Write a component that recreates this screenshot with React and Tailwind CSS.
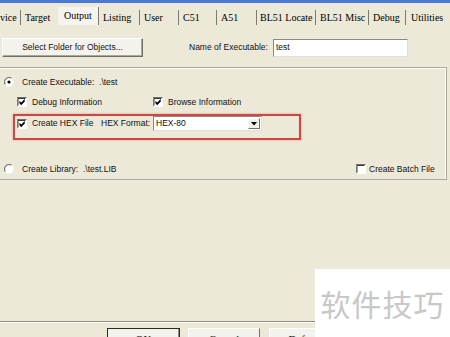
const tabs = [
  { label: 'vice', cls: 'w-[21px] pl-[0px] h-[15px] border-r border-[#7d7a6e]' },
  { label: 'Target', cls: 'w-[37px] pl-[4px] h-[15px]' },
  { label: 'Output', cls: 'w-[41px] pl-[6px] h-[18px] bg-[#f5f4ee] border-r border-[#7d7a6e]' },
  { label: 'Listing', cls: 'w-[41px] pl-[4px] h-[15px] border-r border-[#7d7a6e]' },
  { label: 'User', cls: 'w-[39px] pl-[4px] h-[15px] border-r border-[#7d7a6e]' },
  { label: 'C51', cls: 'w-[38px] pl-[4px] h-[15px] border-r border-[#7d7a6e]' },
  { label: 'A51', cls: 'w-[40px] pl-[4px] h-[15px] border-r border-[#7d7a6e]' },
  { label: 'BL51 Locate', cls: 'w-[59px] pl-[3px] h-[15px] border-r border-[#7d7a6e]' },
  { label: 'BL51 Misc', cls: 'w-[53px] pl-[4px] h-[15px] border-r border-[#7d7a6e]' },
  { label: 'Debug', cls: 'w-[37px] pl-[4px] h-[15px] border-r border-[#7d7a6e]' },
  { label: 'Utilities', cls: 'w-[50px] pl-[5px] h-[15px]' },
];

function CheckBox({ checked }) {
  return (
    <svg width="10" height="10" viewBox="0 0 10 10" className="shrink-0">
      <rect x="0" y="0" width="10" height="10" fill="#fff" />
      <path d="M0 9.5V0.5H9.5" stroke="#6f6d64" strokeWidth="1" fill="none" />
      <path d="M1 8.5V1.5H8.5" stroke="#3a3a36" strokeWidth="1" fill="none" />
      {checked && (
        <path d="M2.5 4.5 L4.2 6.4 L7.8 2.6 M2.5 5.5 L4.2 7.4 L7.8 3.6" stroke="#000" strokeWidth="1.1" fill="none" />
      )}
    </svg>
  );
}

function Radio({ checked }) {
  return (
    <svg width="10" height="10" viewBox="0 0 10 10" className="shrink-0">
      <circle cx="5" cy="5" r="4.5" fill="#fff" />
      <path d="M1.3 7.5 A4.5 4.5 0 0 1 7.5 1.3" stroke="#7a786e" strokeWidth="1.2" fill="none" />
      {checked && <circle cx="5" cy="5" r="1.6" fill="#000" />}
    </svg>
  );
}

export default function App() {
  return (
    <div
      className="relative w-[450px] h-[337px] overflow-hidden bg-[#ece9d8] text-[8.5px] leading-none text-[#111]"
      style={{ fontFamily: '"Liberation Sans", Arial, sans-serif' }}
    >
      <div className="h-[3px] bg-[#4a78d4]" />

      {/* tabs */}
      <div className="flex items-end h-[24px] pb-[2px]" style={{ fontFamily: '"Liberation Serif", serif' }}>
        {tabs.map((t) => (
          <div key={t.label} className={`shrink-0 flex items-center text-[10px] text-black whitespace-nowrap overflow-hidden ${t.cls}`}>
            {t.label}
          </div>
        ))}
      </div>

      {/* folder / name row */}
      <div className="flex items-center h-[19px] mt-[11px]">
        <button className="ml-[2px] w-[141px] h-[19px] bg-[#f3f2ec] border border-t-white border-l-white border-r-[#716f64] border-b-[#716f64] shadow-[inset_-1px_-1px_0_#aca899] text-[8.5px]">
          Select Folder for Objects...
        </button>
        <span className="ml-[46px] whitespace-nowrap">Name of Executable:</span>
        <div className="ml-[5px] w-[135px] h-[18px] bg-white border border-t-[#8c8a80] border-l-[#8c8a80] border-r-[#e2e0d6] border-b-[#e2e0d6] flex items-center pl-[2px]">
          test
        </div>
      </div>

      {/* group */}
      <div className="mt-[10px] w-[447px] h-[113px] border-t border-r border-b border-[#aca899] shadow-[inset_0_1px_0_#fff,inset_-1px_0_0_#fff]">
        <div className="flex items-center h-[12px] mt-[8px] pl-[4px] gap-[8px]">
          <Radio checked />
          <span className="whitespace-pre">Create Executable:  .\test</span>
        </div>

        <div className="flex items-center h-[12px] mt-[8px] pl-[17px]">
          <div className="w-[136px] flex items-center gap-[5px]">
            <CheckBox checked />
            <span>Debug Information</span>
          </div>
          <div className="flex items-center gap-[5px]">
            <CheckBox checked />
            <span>Browse Information</span>
          </div>
        </div>

        <div className="mt-[6px] ml-[13px] w-[288px] h-[26px] border-2 border-[#cc4943] shadow-[0_0_2px_rgba(220,110,110,0.7),inset_0_0_1px_rgba(240,160,160,0.8)] pl-[2px]">
          <div className="flex items-center h-[15px]">
            <CheckBox checked />
            <span className="ml-[5px] w-[69px] whitespace-nowrap">Create HEX File</span>
            <span className="w-[52px] whitespace-nowrap">HEX Format:</span>
            <div className="w-[109px] h-[15px] bg-white border border-t-[#8c8a80] border-l-[#8c8a80] border-r-[#e2e0d6] border-b-[#e2e0d6] flex items-center justify-between pl-[2px] pr-[1px]">
              <span>HEX-80</span>
              <div className="w-[12px] h-[11px] bg-[#f1f0ea] border border-t-white border-l-white border-r-[#716f64] border-b-[#716f64] flex items-center justify-center">
                <svg width="6" height="4" viewBox="0 0 6 4">
                  <path d="M0 0H6L3 3.5Z" fill="#000" />
                </svg>
              </div>
            </div>
          </div>
        </div>

        <div className="flex items-center h-[12px] mt-[23px]">
          <div className="w-[356px] pl-[4px] flex items-center gap-[8px]">
            <Radio />
            <span className="whitespace-pre">Create Library:  .\test.LIB</span>
          </div>
          <div className="flex items-center gap-[3px]">
            <CheckBox />
            <span>Create Batch File</span>
          </div>
        </div>
      </div>

      {/* bottom separator + buttons */}
      <div className="mt-[141px] w-[450px] h-[2px] border-t border-[#8d8a7e] bg-white" />
      <div className="flex mt-[5px]" style={{ fontFamily: '"Liberation Serif", serif' }}>
        <button className="ml-[107px] w-[73px] h-[22px] bg-[#f3f2ec] border border-[#2a2a26] shadow-[inset_-1px_-1px_0_#8f8d81] text-[11px]">
          OK
        </button>
        <button className="ml-[8px] w-[72px] h-[22px] bg-[#f3f2ec] border border-t-white border-l-white border-r-[#716f64] border-b-[#716f64] text-[11px]">
          Cancel
        </button>
        <button className="ml-[9px] w-[72px] h-[22px] bg-[#f3f2ec] border border-t-white border-l-white border-r-[#716f64] border-b-[#716f64] text-[11px]">
          Default
        </button>
      </div>

      {/* watermark */}
      <div
        className="absolute right-0 bottom-0 w-[135px] h-[68px] bg-white flex items-center justify-center text-[30px] text-[#c8c8c8] tracking-[1px]"
        style={{ fontFamily: '"Noto Sans CJK SC", sans-serif' }}
      >
        软件技巧
      </div>
    </div>
  );
}
